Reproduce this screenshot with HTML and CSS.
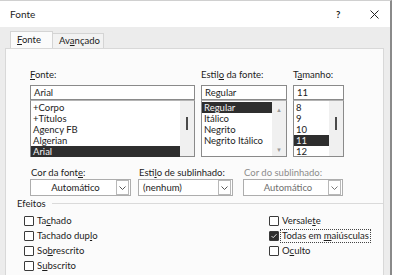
FILE: index.html
```html
<!DOCTYPE html>
<html>
<head>
  <title>Fonte</title>
  <link rel="stylesheet" href="styles.css">
</head>
<body>
  <div class="dialog">
    <div class="titlebar">
      <span class="title">Fonte</span>
      <span class="help">?</span>
      <span class="close">
        <svg width="9" height="9" viewBox="0 0 9 9"><path d="M0.5 0.5L8.5 8.5M8.5 0.5L0.5 8.5" stroke="#222" stroke-width="1"/></svg>
      </span>
    </div>

    <div class="tabs">
      <div class="tab active"><u>F</u>onte</div>
      <div class="tab">Av<u>a</u>nçado</div>
    </div>

    <div class="panel">
      <div class="fields">
        <div class="field">
          <div class="label"><u>F</u>onte:</div>
          <div class="input">Arial</div>
          <div class="list">
            <div class="items">
              <div class="item">+Corpo</div>
              <div class="item">+Títulos</div>
              <div class="item">Agency FB</div>
              <div class="item">Algerian</div>
              <div class="item sel">Arial</div>
            </div>
            <div class="scroll"><span class="thumb"></span></div>
          </div>
        </div>

        <div class="field">
          <div class="label">Estil<u>o</u> da fonte:</div>
          <div class="input">Regular</div>
          <div class="list">
            <div class="items">
              <div class="item sel">Regular</div>
              <div class="item">Itálico</div>
              <div class="item">Negrito</div>
              <div class="item">Negrito Itálico</div>
            </div>
            <div class="scroll arrows"><span>&#9650;</span><span>&#9660;</span></div>
          </div>
        </div>

        <div class="field">
          <div class="label">T<u>a</u>manho:</div>
          <div class="input">11</div>
          <div class="list">
            <div class="items">
              <div class="item">8</div>
              <div class="item">9</div>
              <div class="item">10</div>
              <div class="item sel">11</div>
              <div class="item">12</div>
            </div>
            <div class="scroll"><span class="thumb"></span></div>
          </div>
        </div>
      </div>

      <div class="combos">
        <div class="field">
          <div class="label">Cor da font<u>e</u>:</div>
          <div class="combo center">
            <span class="value">Automático</span>
            <span class="chev"><svg width="7" height="4" viewBox="0 0 7 4"><path d="M0.5 0.5L3.5 3.5L6.5 0.5" fill="none" stroke="#555"/></svg></span>
          </div>
        </div>
        <div class="field">
          <div class="label">Esti<u>l</u>o de sublinhado:</div>
          <div class="combo">
            <span class="value">(nenhum)</span>
            <span class="chev"><svg width="7" height="4" viewBox="0 0 7 4"><path d="M0.5 0.5L3.5 3.5L6.5 0.5" fill="none" stroke="#555"/></svg></span>
          </div>
        </div>
        <div class="field shift">
          <div class="label disabled">Cor do sublinhado:</div>
          <div class="combo center disabled">
            <span class="value">Automático</span>
            <span class="chev"><svg width="7" height="4" viewBox="0 0 7 4"><path d="M0.5 0.5L3.5 3.5L6.5 0.5" fill="none" stroke="#777"/></svg></span>
          </div>
        </div>
      </div>

      <div class="group">
        <span>Efeitos</span>
        <span class="rule"></span>
      </div>

      <div class="effects">
        <div class="col">
          <div class="check"><span class="box"></span>Ta<u>c</u>hado</div>
          <div class="check"><span class="box"></span>Tachado dup<u>l</u>o</div>
          <div class="check"><span class="box"></span>So<u>b</u>rescrito</div>
          <div class="check"><span class="box"></span>S<u>u</u>bscrito</div>
        </div>
        <div class="col right">
          <div class="check"><span class="box"></span>Versale<u>t</u>e</div>
          <div class="check"><span class="box on"><svg width="8" height="8" viewBox="0 0 8 8"><path d="M1.5 4L3.2 5.7L6.5 2.2" fill="none" stroke="#ddd" stroke-width="1"/></svg></span><span class="focus">Todas em <u>m</u>aiúsculas</span></div>
          <div class="check"><span class="box"></span>O<u>c</u>ulto</div>
        </div>
      </div>
    </div>
  </div>
</body>
</html>
```

FILE: styles.css
```css
body {
  margin: 0;
  background-color: #fff;
  font-family: Lato, "Noto Sans", sans-serif;
  font-size: 9.5px;
  color: #1c1c1c;
}

u {
  text-decoration-thickness: 1px;
  text-underline-offset: 1px;
}

.dialog {
  width: 392px;
  height: 275px;
  background-color: #ececec;
  border-right: 2px solid #8a8a8a;
  border-top: 1px solid #d0d0d0;
  box-sizing: border-box;
  display: flex;
  flex-direction: column;
  overflow: hidden;
}

.titlebar {
  height: 26px;
  background-color: #fff;
  display: flex;
  align-items: center;
  padding: 0 0 0 10px;
  font-size: 10px;
}

.title {
  flex: 1;
}

.help {
  width: 34px;
  font-weight: bold;
  font-size: 9.5px;
}

.close {
  width: 20px;
  display: flex;
}

.tabs {
  height: 21px;
  display: flex;
  align-items: flex-end;
  padding-left: 10px;
}

.tab {
  height: 14px;
  padding: 0 6px;
  line-height: 13px;
  border: 1px solid #d4d4d4;
  border-bottom: none;
  background-color: #f2f2f2;
}

.tab.active {
  height: 16px;
  width: 29px;
  background-color: #fbfbfb;
  line-height: 15px;
}

.tab + .tab {
  border-left: none;
  width: 38px;
}

.panel {
  flex: 1;
  margin: 0 6px 0 5px;
  background-color: #fbfbfb;
  border: 1px solid #d8d8d8;
  border-bottom: none;
  padding: 20px 0 0 11px;
}

.fields {
  display: grid;
  grid-template-columns: 165px 86px 51px;
  column-gap: 6px;
  margin-left: 13px;
}

.label {
  height: 12px;
  line-height: 12px;
  margin-bottom: 4px;
}

.label.disabled {
  color: #8c8c8c;
}

.input {
  height: 15px;
  box-sizing: border-box;
  border: 1px solid #8a8a8a;
  background-color: #fff;
  padding-left: 3px;
  line-height: 13px;
}

.list {
  height: 57px;
  box-sizing: border-box;
  border: 1px solid #8a8a8a;
  border-top-color: #b4b4b4;
  background-color: #fff;
  display: flex;
}

.items {
  flex: 1;
  padding-top: 1px;
}

.item {
  height: 11px;
  line-height: 11px;
  padding-left: 2px;
}

.item.sel {
  background-color: #2e2e2e;
  color: #f2f2f2;
}

.scroll {
  width: 14px;
  background-color: #f0f0f0;
  display: flex;
  justify-content: center;
  padding-top: 16px;
  box-sizing: border-box;
}

.thumb {
  width: 2px;
  height: 13px;
  background-color: #4a4a4a;
}

.scroll.arrows {
  flex-direction: column;
  align-items: center;
  justify-content: space-between;
  padding: 5px 0 3px;
  font-size: 6px;
  color: #9a9a9a;
}

.combos {
  display: grid;
  grid-template-columns: 101px 95px 103px;
  column-gap: 7px;
  margin: 10px 0 0 13px;
}

.combos .label {
  margin-bottom: 0;
  padding-left: 1px;
}

.field.shift {
  padding-left: 3px;
}

.combo {
  height: 17px;
  box-sizing: border-box;
  border: 1px solid #adadad;
  background-color: #fff;
  display: flex;
  align-items: center;
  padding-left: 4px;
}

.combo .value {
  flex: 1;
}

.combo.center .value {
  text-align: center;
}

.combo.disabled {
  color: #6e6e6e;
}

.chev {
  width: 11px;
  height: 13px;
  border: 1px solid #b8b8b8;
  margin-right: 1px;
  display: flex;
  align-items: center;
  justify-content: center;
}

.group {
  display: flex;
  align-items: center;
  margin-top: 1px;
  height: 12px;
}

.rule {
  flex: 1;
  height: 1px;
  background-color: #dadada;
  margin-left: 6px;
}

.effects {
  display: flex;
  margin: 4px 0 0 7px;
}

.col {
  width: 245px;
}

.col.right {
  width: auto;
}

.check {
  height: 15px;
  display: flex;
  align-items: center;
}

.box {
  width: 10px;
  height: 10px;
  box-sizing: border-box;
  border: 1px solid #3a3a3a;
  border-radius: 1px;
  background-color: #fff;
  margin-right: 3px;
  display: flex;
  align-items: center;
  justify-content: center;
}

.box.on {
  background-color: #2e2e2e;
  margin-right: 1px;
}

.focus {
  border: 1px dotted #444;
  padding: 0 1px;
  line-height: 12px;
}
```
